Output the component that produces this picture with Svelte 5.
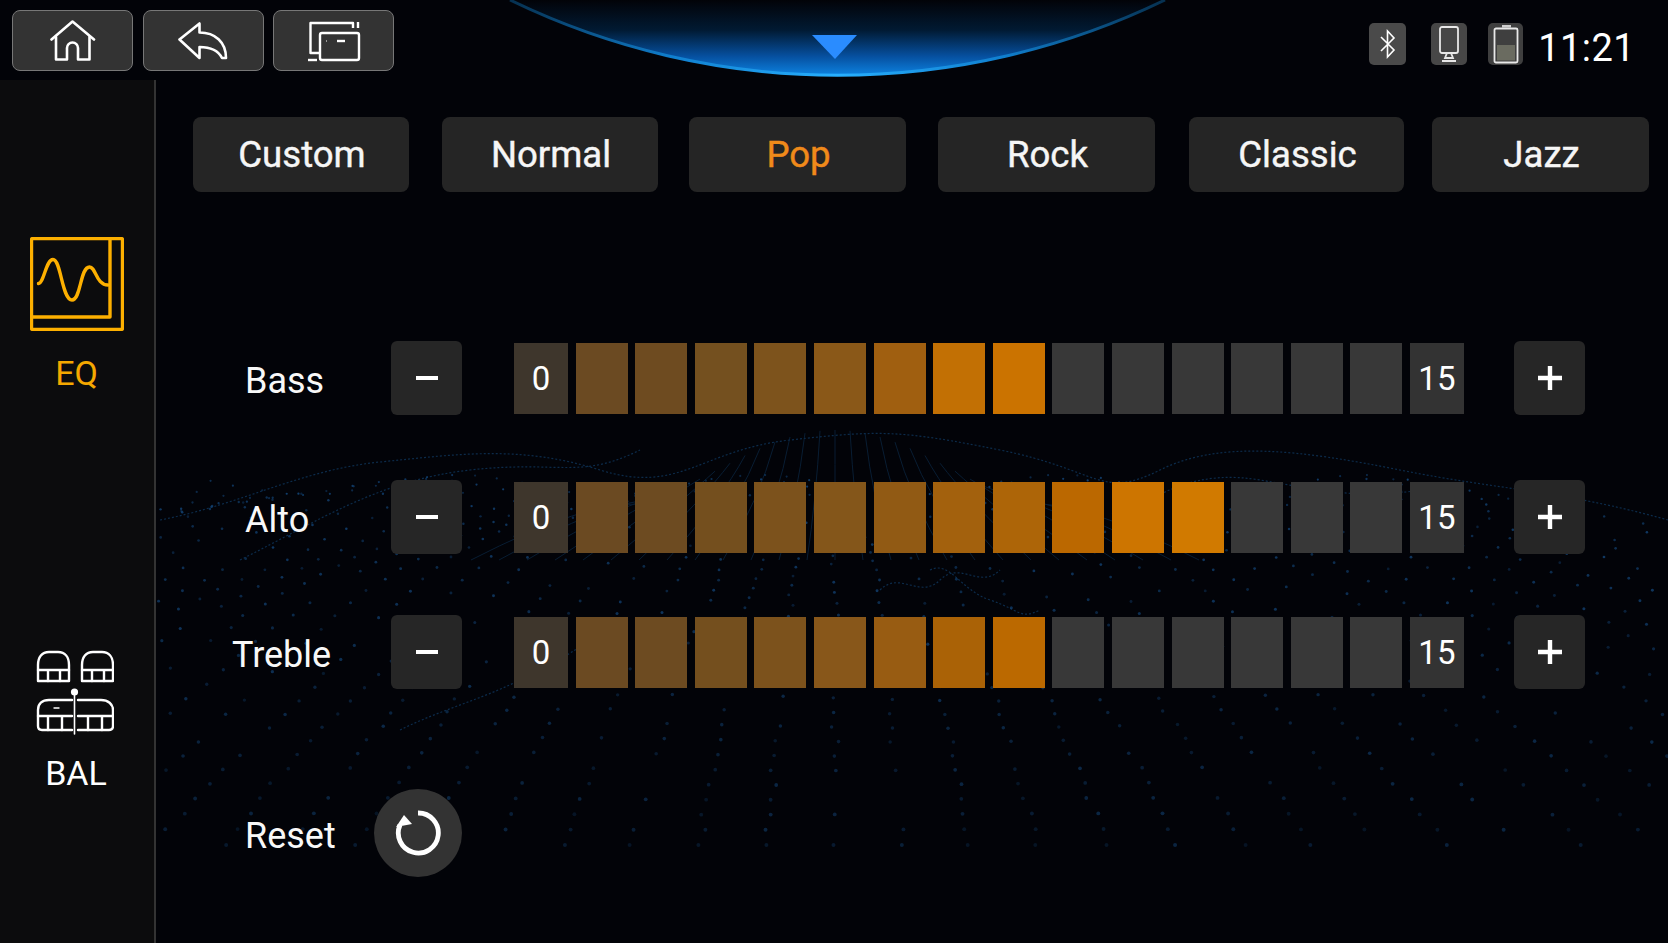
<script>
    const tabs = [
        { name: "Custom", gap: 0, w: 216 },
        { name: "Normal", gap: 33, w: 216 },
        { name: "Pop", gap: 31, w: 217, active: true },
        { name: "Rock", gap: 32, w: 217 },
        { name: "Classic", gap: 34, w: 215 },
        { name: "Jazz", gap: 28, w: 217 }
    ];

    const bands = [
        {
            name: "Bass", top: 149, shift: 0,
            ramp: ["#6b4a22", "#6e4b20", "#74501f", "#7d531c", "#8a5818", "#a05f10", "#c27004", "#cb7300"]
        },
        {
            name: "Alto", top: 65, shift: 0,
            ramp: ["#6b4a22", "#6d4b21", "#744f1e", "#7c521c", "#84561a", "#915a14", "#a3610d", "#ad6508", "#bb6800", "#cd7500", "#d17a00"]
        },
        {
            name: "Treble", top: 61, shift: -13,
            ramp: ["#6b4a22", "#6d4b21", "#744f1e", "#7c521c", "#88571a", "#985c12", "#aa6206", "#bb6900"]
        }
    ];

    function cellColor(band, i) {
        return band.ramp[i] || "#383838";
    }

    function noise(n) {
        const s = Math.sin(n * 127.1) * 43758.5453;
        return s - Math.floor(s);
    }

    // faint perspective dot field behind the sliders
    const dots = [];
    for (let j = 0; j < 32; j++) {
        const d = j / 31;
        const y = 485 + 360 * Math.pow(d, 1.35);
        const spacing = 24 + 44 * d;
        for (let i = -26; i <= 26; i++) {
            const x = 835 + i * spacing + (noise(i * 3 + j) - 0.5) * 8;
            if (x < 158 || x > 1668) continue;
            const bump = Math.sin(i * 0.5 + j * 0.3) * 10 * (1 - d);
            if (noise(i * 7 + j * 13) < 0.2) continue;
            dots.push({ x, y: y + bump, r: 1.1 + d * 0.9, o: (0.45 + noise(i + j * 5) * 0.5) * (1 - 0.45 * d) });
        }
    }

    const ridges = [];
    for (let i = -13; i <= 13; i++) {
        const top = 835 + i * 15;
        const lift = 40 * Math.cos(i / 5);
        ridges.push(`M${top} ${470 - lift} Q${top + i * 4} ${500} ${835 + i * 28} 560`);
    }

    const waves = [
        "M160 520 C240 505 300 470 380 462 S520 445 600 470 S700 450 790 440 S900 430 1000 450 S1100 500 1160 470 S1300 450 1400 470 S1560 490 1668 520",
        "M240 560 C320 520 380 480 470 470 S580 480 640 450",
        "M880 590 C900 570 920 600 940 580 S980 590 1000 570",
        "M930 570 C950 560 960 590 990 600 S1020 620 1040 610",
        "M400 730 C440 710 480 700 520 680 S560 660 590 640",
        "M1120 520 C1160 490 1200 470 1260 480 S1360 500 1420 490"
    ];
</script>

<div class="screen">
    <svg class="field" width="1668" height="943" viewBox="0 0 1668 943">
        {#each ridges as d}
            <path {d} fill="none" stroke="#081d33" stroke-width="1" />
        {/each}
        {#each waves as d}
            <path {d} fill="none" stroke="#0c2b4a" stroke-width="1.2" stroke-dasharray="2 2" />
        {/each}
        {#each dots as dot}
            <circle cx={dot.x} cy={dot.y} r={dot.r} fill="#134476" opacity={dot.o} />
        {/each}
    </svg>

    <svg class="dome" width="1668" height="90" viewBox="0 0 1668 90">
        <defs>
            <linearGradient id="domeFill" x1="0" y1="0" x2="0" y2="1">
                <stop offset="0" stop-color="#020308" />
                <stop offset="0.4" stop-color="#011a33" />
                <stop offset="0.75" stop-color="#0650a0" />
                <stop offset="1" stop-color="#0d82e0" />
            </linearGradient>
            <linearGradient id="domeEdge" x1="0" y1="0" x2="1" y2="0">
                <stop offset="0" stop-color="#06304f" />
                <stop offset="0.25" stop-color="#1080d0" />
                <stop offset="0.5" stop-color="#28b0ff" />
                <stop offset="0.75" stop-color="#1080d0" />
                <stop offset="1" stop-color="#06304f" />
            </linearGradient>
        </defs>
        <path d="M510 0 A750 750 0 0 0 1165 0 Z" fill="url(#domeFill)" />
        <path d="M510 0 A750 750 0 0 0 1165 0" fill="none" stroke="url(#domeEdge)" stroke-width="3" />
        <path d="M812 35 H857 L835 59 Z" fill="#2a8cff" />
    </svg>

    <header class="topbar">
        <div class="navs">
            <button class="nav" aria-label="Home">
                <svg width="46" height="41" viewBox="0 0 46 41" fill="none" stroke="#fff" stroke-width="2.6" stroke-linejoin="round" stroke-linecap="round">
                    <path d="M1.5 19.5 L22.5 1.5 L44 19.5" />
                    <path d="M6 17 V39.5 H17 V28 a5.5 5.5 0 0 1 11 0 V39.5 H39.5 V17" />
                </svg>
            </button>
            <button class="nav" aria-label="Back">
                <svg width="50" height="38" viewBox="0 0 50 38" fill="none" stroke="#fff" stroke-width="2.6" stroke-linejoin="round">
                    <path d="M1.5 17.5 L21.5 1.5 V10.5 C37 10.5 48 20 48 36 H44 C41 30 34 25 21.5 25 V36 Z" />
                </svg>
            </button>
            <button class="nav" aria-label="Windows">
                <svg width="56" height="42" viewBox="0 0 56 42" fill="none" stroke="#fff" stroke-width="2.4" stroke-linejoin="round">
                    <path d="M47 8 V3 H4.5 V33 H13" />
                    <path d="M2 40 H11" />
                    <path d="M52 2 V8" />
                    <rect x="14" y="13" width="39" height="27" rx="2" />
                    <path d="M31 21 H39" />
                    <path d="M20 21 H21" stroke-width="1" />
                </svg>
            </button>
        </div>
        <div class="status">
            <div class="chip bt">
                <svg width="18" height="32" viewBox="0 0 18 32" fill="none" stroke="#fff" stroke-width="1.6">
                    <path d="M2 9 L15 22 L8.5 29 V3 L15 10 L2 23" />
                </svg>
            </div>
            <div class="chip phone">
                <svg width="24" height="38" viewBox="0 0 24 38" fill="none" stroke="#e8e8e8" stroke-width="1.8">
                    <rect x="3" y="2" width="18" height="26" rx="2" />
                    <path d="M10 28 L8 33 H16 L14 28 M5 36 H19" />
                </svg>
            </div>
            <div class="chip battery">
                <svg width="28" height="40" viewBox="0 0 28 40" fill="none">
                    <rect x="10" y="1" width="9" height="2.5" fill="#cfcfcf" />
                    <rect x="2.5" y="4.5" width="23" height="34" rx="1.5" stroke="#e8e8e8" stroke-width="1.8" />
                    <rect x="5" y="21" width="18" height="15.5" fill="#6a6b60" />
                </svg>
            </div>
            <span class="time">11:21</span>
        </div>
    </header>

    <div class="body">
        <aside class="side">
            <div class="side-item eq">
                <svg width="94" height="94" viewBox="0 0 94 94" fill="none" stroke="#fdb000" stroke-width="3.4" stroke-linejoin="round" stroke-linecap="round">
                    <rect x="1.5" y="1.5" width="91" height="91" rx="1.5" />
                    <path d="M80 1.5 V80 H1.5" />
                    <path d="M8.5 46.5 C14 46 16 22.5 23 22.5 C31 22.5 32 63 42 63 C51 63 50 30 59.5 30 C66 30 66 48 78 48" />
                </svg>
                <span>EQ</span>
            </div>
            <div class="side-item bal">
                <svg width="78" height="86" viewBox="0 0 78 86" fill="none" stroke="#fff" stroke-width="2.4" stroke-linejoin="round" stroke-linecap="round">
                    <path d="M2 31 V15 C2 7 6 2 13 2 H22 C29 2 33 7 33 15 V31 H2 Z" />
                    <path d="M2 20 H33 M12 20 V31 M24 20 V31" />
                    <path d="M46 31 V15 C46 7 50 2 57 2 H66 C73 2 77 7 77 15 V31 H46 Z" />
                    <path d="M46 20 H77 M56 20 V31 M68 20 V31" />
                    <path d="M36 50 H13 C6 50 2 54 2 60 V76 C2 79 3 80 6 80 H36" />
                    <path d="M42 50 H65 C72 50 77 54 77 60 V76 C77 79 76 80 73 80 H42" />
                    <path d="M2 66 H36 M42 66 H77 M12 66 V80 M26 66 V80 M52 66 V80 M66 66 V80" />
                    <path d="M18 58 H23" stroke-width="1.4" />
                    <path d="M38.5 44 V84" stroke-width="1.6" />
                    <circle cx="38.5" cy="42" r="3.6" fill="#fff" stroke="none" />
                </svg>
                <span>BAL</span>
            </div>
        </aside>

        <main class="main">
            <div class="tabs">
                {#each tabs as t}
                    <button class="tab" class:active={t.active} style="width:{t.w}px;margin-left:{t.gap}px">{t.name}</button>
                {/each}
            </div>

            {#each bands as band}
                <div class="row" style="margin-top:{band.top}px">
                    <span class="label" style="transform:translateX({band.shift}px)">{band.name}</span>
                    <button class="step">
                        <svg width="24" height="24" viewBox="0 0 24 24"><path d="M1 12 H23" stroke="#fff" stroke-width="4" /></svg>
                    </button>
                    <div class="track">
                        <div class="end zero">0</div>
                        {#each Array(14) as _, i}
                            <div class="cell" style="background:{cellColor(band, i)}"></div>
                        {/each}
                        <div class="end max">15</div>
                    </div>
                    <button class="step plus">
                        <svg width="26" height="26" viewBox="0 0 26 26"><path d="M1 13 H25 M13 1 V25" stroke="#fff" stroke-width="4.4" /></svg>
                    </button>
                </div>
            {/each}

            <div class="reset">
                <span class="label">Reset</span>
                <button class="round" aria-label="Reset">
                    <svg width="48" height="48" viewBox="0 0 48 48" fill="none">
                        <path d="M24 4 A20 20 0 1 1 6 16" stroke="#fff" stroke-width="4.8" />
                        <path d="M10 6 L18 15 L2 18 Z" fill="#fff" />
                    </svg>
                </button>
            </div>
        </main>
    </div>
</div>

<style>
    :global(body){
        margin: 0;
        background: #020308;
    }
    .screen{
        position: relative;
        width: 1668px;
        height: 943px;
        overflow: hidden;
        background: #020308;
        font-family: Roboto, "Liberation Sans", sans-serif;
        color: #fff;
    }
    .field, .dome{
        position: absolute;
        left: 0;
        top: 0;
    }
    button{
        font-family: inherit;
        color: inherit;
        margin: 0;
        padding: 0;
        border: none;
        display: flex;
        align-items: center;
        justify-content: center;
        cursor: pointer;
    }
    .topbar{
        position: relative;
        height: 80px;
        box-sizing: border-box;
        display: flex;
        justify-content: space-between;
        padding: 10px 33px 0 12px;
    }
    .navs{
        display: flex;
        gap: 9.5px;
    }
    .nav{
        width: 121px;
        height: 61px;
        box-sizing: border-box;
        background: #333;
        border: 1.5px solid #777;
        border-radius: 8px;
    }
    .status{
        display: flex;
        align-items: flex-start;
        padding-top: 13px;
    }
    .chip{
        height: 42px;
        box-sizing: border-box;
        display: flex;
        align-items: center;
        justify-content: center;
        border-radius: 5px;
        background: #4a4a4a;
    }
    .bt{ width: 37px; }
    .phone{ width: 36px; margin-left: 25px; background: #474747; }
    .battery{ width: 35px; margin-left: 21px; background: #3f3f3f; }
    .time{
        margin-left: 15px;
        font-size: 38px;
        font-weight: 400;
        line-height: 50px;
        letter-spacing: 0.4px;
    }
    .body{
        position: relative;
        height: 863px;
        display: flex;
    }
    .side{
        width: 156px;
        box-sizing: border-box;
        background: #0c0c0d;
        border-right: 2px solid #333;
        padding-top: 157px;
        flex: none;
    }
    .side-item{
        display: flex;
        flex-direction: column;
        align-items: center;
        font-size: 34px;
        line-height: 38px;
    }
    .eq{
        color: #f5a800;
        gap: 23px;
        padding-right: 1px;
    }
    .bal{
        margin-top: 258px;
        gap: 18px;
        padding-right: 5px;
    }
    .bal span{
        margin-left: 3px;
    }
    .main{
        flex: 1;
        padding: 37px 0 0 37px;
        min-width: 0;
    }
    .tabs{
        display: flex;
    }
    .tab{
        box-sizing: border-box;
        height: 75px;
        padding-left: 2px;
        background: #252525;
        border-radius: 8px;
        font-size: 36.6px;
        font-weight: 400;
        -webkit-text-stroke: 0.4px currentColor;
        color: #f6f6f6;
        flex: none;
    }
    .tab.active{
        color: #f08a1a;
    }
    .row{
        display: flex;
        align-items: center;
        height: 74px;
        margin-left: 52px;
    }
    .label{
        font-size: 36px;
        width: 146px;
        flex: none;
        position: relative;
        top: 3px;
        color: #f8f8f8;
    }
    .step{
        width: 71px;
        height: 74px;
        background: #262626;
        border-radius: 6px;
        flex: none;
    }
    .plus{
        margin-left: 50px;
    }
    .track{
        display: flex;
        gap: 7.6px;
        height: 71px;
        width: 950px;
        margin-left: 52px;
        flex: none;
    }
    .cell{
        width: 52px;
        flex: none;
    }
    .end{
        width: 54px;
        flex: none;
        display: flex;
        align-items: center;
        justify-content: center;
        font-size: 33px;
    }
    .zero{
        background: #3e362c;
    }
    .max{
        background: #333;
    }
    .reset{
        display: flex;
        align-items: center;
        margin: 100px 0 0 52px;
    }
    .reset .label{
        width: 129px;
    }
    .round{
        width: 88px;
        height: 88px;
        border-radius: 50%;
        background: #333;
    }
</style>
